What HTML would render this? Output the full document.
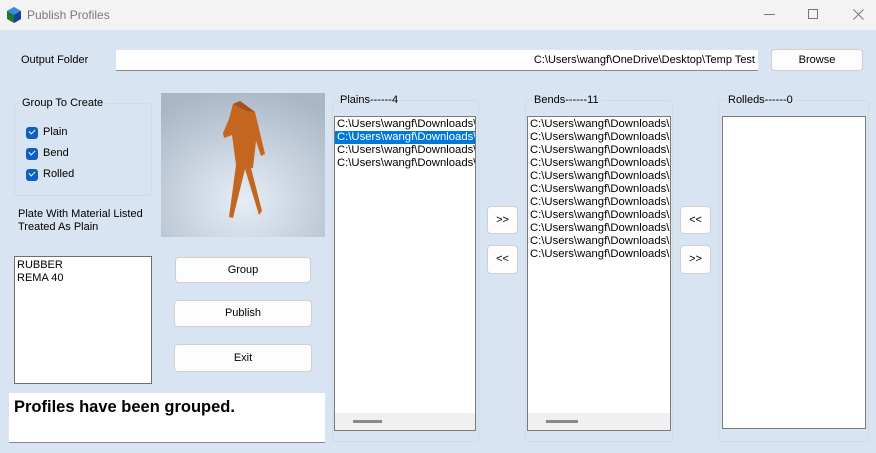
<!DOCTYPE html>
<html><head><meta charset="utf-8"><style>
*{box-sizing:border-box;margin:0;padding:0}
body{width:876px;height:453px;background:#d8e4f1;font-family:"Liberation Sans",sans-serif;font-size:11px;color:#000;position:relative;overflow:hidden}
.a{position:absolute}
.title{left:0;top:0;width:876px;height:30px;background:#f3f3f3}
.btn{position:absolute;background:#fdfdfd;border:1px solid #d0d0d0;border-radius:4px;text-align:center;font-size:11px}
.box{position:absolute;background:#fff;border:1px solid #7a7a7a}
.grp{position:absolute;border:1px solid #cfdbe8;border-radius:3px}
.cb{position:absolute;width:12px;height:12px;background:#0f5fc0;border-radius:3px}
.cb:after{content:"";position:absolute;left:3px;top:2px;width:5px;height:3px;border-left:1.3px solid #fff;border-bottom:1.3px solid #fff;transform:rotate(-45deg)}
.row{height:13px;line-height:13px;white-space:nowrap;overflow:hidden;padding-left:2px;font-size:11.3px}
.sel{background:#0078d7;color:#fff}
.hs{position:absolute;left:0;right:0;bottom:0;height:17px;background:#f0f0f0}
.hs i{position:absolute;top:7px;height:3px;background:#888}
</style></head><body>
<div class="a title"></div>
<svg class="a" style="left:6px;top:7px" width="16" height="16" viewBox="0 0 16 16"><polygon points="8,0 15,4 15,12 8,16 1,12 1,4" fill="#1e7a2e"/><polygon points="8,0 15,4 8,8 1,4" fill="#3a8be0"/><polygon points="8,8 15,4 15,12 8,16" fill="#1a3f8f"/></svg>
<div class="a" style="left:27px;top:8px;color:#7a7a7a;font-size:12px">Publish Profiles</div>
<div class="a" style="left:764px;top:14px;width:11px;height:1px;background:#777"></div>
<div class="a" style="left:808px;top:9px;width:10px;height:10px;border:1px solid #777"></div>
<svg class="a" style="left:853px;top:9px" width="11" height="11"><path d="M0.5 0.5L10.5 10.5M10.5 0.5L0.5 10.5" stroke="#777" stroke-width="1"/></svg>

<div class="a" style="left:21px;top:54px">Output Folder</div>
<div class="a" style="left:116px;top:50px;width:642px;height:21px;background:#fff;border-bottom:1px solid #888;text-align:right;padding-right:3px;line-height:21px">C:\Users\wangf\OneDrive\Desktop\Temp Test</div>
<div class="btn" style="left:771px;top:49px;width:92px;height:22px;line-height:20px">Browse</div>

<div class="grp" style="left:14px;top:103px;width:138px;height:93px"></div>
<div class="a" style="left:20px;top:97px;background:#d8e4f1;padding:0 2px">Group To Create</div>
<div class="cb" style="left:26px;top:127px"></div><div class="a" style="left:43px;top:126px">Plain</div>
<div class="cb" style="left:26px;top:148px"></div><div class="a" style="left:43px;top:147px">Bend</div>
<div class="cb" style="left:26px;top:169px"></div><div class="a" style="left:43px;top:168px">Rolled</div>
<div class="a" style="left:18px;top:208px;line-height:13px">Plate With Material Listed<br>Treated As Plain</div>

<svg class="a" style="left:161px;top:93px" width="164" height="144" viewBox="0 0 164 144">
<defs><radialGradient id="g" cx="50%" cy="75%" r="80%"><stop offset="0" stop-color="#e6edf6"/><stop offset="1" stop-color="#a9b6c6"/></radialGradient></defs>
<rect width="164" height="144" fill="url(#g)"/>
<polygon points="72,11 79,8 94,19 104,61 100,63 95,48 92,75 84,76 72,125 68,124 75,72 71,42 63,45 62,40 68,26" fill="#c4661f"/>
<polygon points="84,76 90,75 101,118 98,122" fill="#c4661f"/>
<polygon points="72,11 79,8 94,19 86,18" fill="#a5501a"/>
</svg>

<div class="box" style="left:14px;top:256px;width:138px;height:128px;border-color:#6e6e6e"><div style="padding:2px 2px;line-height:13px">RUBBER<br>REMA 40</div></div>

<div class="btn" style="left:175px;top:257px;width:136px;height:26px;line-height:24px">Group</div>
<div class="btn" style="left:174px;top:300px;width:138px;height:27px;line-height:25px">Publish</div>
<div class="btn" style="left:174px;top:344px;width:138px;height:28px;line-height:26px">Exit</div>

<div class="a" style="left:9px;top:393px;width:316px;height:50px;background:#fff;border-bottom:1px solid #888;font-weight:bold;font-size:16.5px;padding:5px 5px">Profiles have been grouped.</div>

<div class="grp" style="left:332px;top:100px;width:147px;height:342px"></div>
<div class="a" style="left:338px;top:94px;background:#d8e4f1;padding:0 2px">Plains------4</div>
<div class="box" style="left:334px;top:116px;width:142px;height:315px;padding-top:1px">
<div class="row">C:\Users\wangf\Downloads\</div>
<div class="row sel">C:\Users\wangf\Downloads\</div>
<div class="row">C:\Users\wangf\Downloads\</div>
<div class="row">C:\Users\wangf\Downloads\</div>
<div class="hs"><i style="left:18px;width:29px"></i></div></div>

<div class="btn" style="left:487px;top:206px;width:31px;height:28px;line-height:26px">&gt;&gt;</div>
<div class="btn" style="left:487px;top:245px;width:31px;height:29px;line-height:27px">&lt;&lt;</div>

<div class="grp" style="left:525px;top:100px;width:148px;height:342px"></div>
<div class="a" style="left:532px;top:94px;background:#d8e4f1;padding:0 2px">Bends------11</div>
<div class="box" style="left:527px;top:116px;width:144px;height:315px;padding-top:1px">
<div class="row">C:\Users\wangf\Downloads\</div><div class="row">C:\Users\wangf\Downloads\</div><div class="row">C:\Users\wangf\Downloads\</div><div class="row">C:\Users\wangf\Downloads\</div><div class="row">C:\Users\wangf\Downloads\</div><div class="row">C:\Users\wangf\Downloads\</div><div class="row">C:\Users\wangf\Downloads\</div><div class="row">C:\Users\wangf\Downloads\</div><div class="row">C:\Users\wangf\Downloads\</div><div class="row">C:\Users\wangf\Downloads\</div><div class="row">C:\Users\wangf\Downloads\</div>
<div class="hs"><i style="left:18px;width:32px"></i></div></div>

<div class="btn" style="left:680px;top:206px;width:31px;height:28px;line-height:26px">&lt;&lt;</div>
<div class="btn" style="left:680px;top:245px;width:31px;height:29px;line-height:27px">&gt;&gt;</div>

<div class="grp" style="left:718px;top:100px;width:151px;height:342px"></div>
<div class="a" style="left:726px;top:94px;background:#d8e4f1;padding:0 2px">Rolleds------0</div>
<div class="box" style="left:722px;top:116px;width:144px;height:313px"></div>
</body></html>
